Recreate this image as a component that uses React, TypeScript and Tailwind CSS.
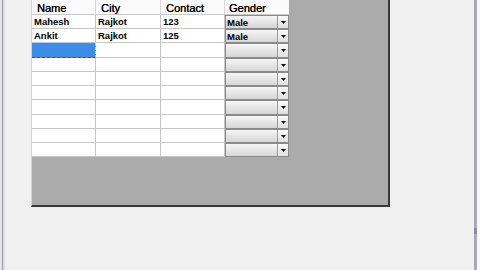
import React from "react"

type Row = { name: string; city: string; contact: string; gender: string }

const rows: Row[] = [
  { name: "Mahesh", city: "Rajkot", contact: "123", gender: "Male" },
  { name: "Ankit", city: "Rajkot", contact: "125", gender: "Male" },
  { name: "", city: "", contact: "", gender: "" },
  { name: "", city: "", contact: "", gender: "" },
  { name: "", city: "", contact: "", gender: "" },
  { name: "", city: "", contact: "", gender: "" },
  { name: "", city: "", contact: "", gender: "" },
  { name: "", city: "", contact: "", gender: "" },
  { name: "", city: "", contact: "", gender: "" },
  { name: "", city: "", contact: "", gender: "" },
]

// row heights add up to 142px so the grid ends where the reference does
const heights = ["h-[14px]", "h-[14px]", "h-[15px]", "h-[14px]", "h-[14px]", "h-[14px]", "h-[15px]", "h-[14px]", "h-[14px]", "h-[14px]"]

const font = { fontFamily: '"Liberation Sans", Arial, sans-serif' }

function Combo({ value, h }: { value: string; h: string }) {
  return (
    <div className={`${h} w-[64px] flex border border-[#8a8a8a] bg-gradient-to-b from-[#f6f6f6] to-[#d6d6d6]`}>
      <div className="flex-1 flex items-center pl-[1px] pt-[1px] text-[9.5px] font-bold text-black leading-none">{value}</div>
      <div className="w-[11px] border-l border-[#9a9a9a] bg-gradient-to-b from-[#fafafa] to-[#e0e0e0] flex items-center justify-center">
        <svg width="5" height="3" viewBox="0 0 5 3">
          <path d="M0 0h5L2.5 3z" fill="#111" />
        </svg>
      </div>
    </div>
  )
}

export default function App() {
  return (
    <div className="w-[480px] h-[270px] bg-[#f0f0f0] flex overflow-hidden" style={font}>
      {/* left window frame */}
      <div className="w-[2px] bg-[#e4e4e4]" />
      <div className="w-[1px] bg-[#9c9aa4]" />
      <div className="w-[2px] bg-[#dedede]" />

      <div className="flex-1 pl-[26px]">
        {/* scroll pane */}
        <div className="w-[359px] h-[207px] bg-[#ababab] border-l border-[#d4d4d4] border-r-2 border-b-2 border-r-[#3a3a3a] border-b-[#3a3a3a]">
          <div className="w-[257px]">
            {/* header */}
            <div className="flex h-[15px] bg-[#fbfbfb] border-b border-[#c8c8c8] text-[11px] text-black leading-none [text-shadow:0.3px_0_0_#000]">
              <div className="w-[64px] border-r border-[#d6d6d6] pl-[5px] pt-[3px] flex items-center">Name</div>
              <div className="w-[65px] border-r border-[#d6d6d6] pl-[5px] pt-[3px] flex items-center">City</div>
              <div className="w-[64px] border-r border-[#d6d6d6] pl-[5px] pt-[3px] flex items-center">Contact</div>
              <div className="w-[64px] pl-[4px] pt-[3px] flex items-center">Gender</div>
            </div>
            {rows.map((r, i) => (
              <div key={i} className="flex text-[9.5px] font-bold text-black leading-none">
                <div
                  className={`${heights[i]} w-[64px] border-r border-b border-[#c6c6c6] pl-[2px] pt-[1px] flex items-center ${
                    i === 2 ? "bg-[#3c8de6] border-b-[#1f5aa0] border-dashed" : "bg-white"
                  }`}
                >
                  {r.name}
                </div>
                <div className={`${heights[i]} w-[65px] bg-white border-r border-b border-[#c6c6c6] pl-[2px] pt-[1px] flex items-center`}>
                  {r.city}
                </div>
                <div className={`${heights[i]} w-[64px] bg-white border-r border-b border-[#c6c6c6] pl-[2px] pt-[1px] flex items-center`}>
                  {r.contact}
                </div>
                <Combo value={r.gender} h={heights[i]} />
              </div>
            ))}
          </div>
        </div>
      </div>

      {/* right window frame */}
      <div className="w-[3px] bg-[#aca8b6] flex flex-col">
        <div className="h-[228px]" />
        <div className="h-[6px] bg-[#8e8a98]" />
      </div>
      <div className="w-[3px] bg-[#f8f8f8]" />
    </div>
  )
}
